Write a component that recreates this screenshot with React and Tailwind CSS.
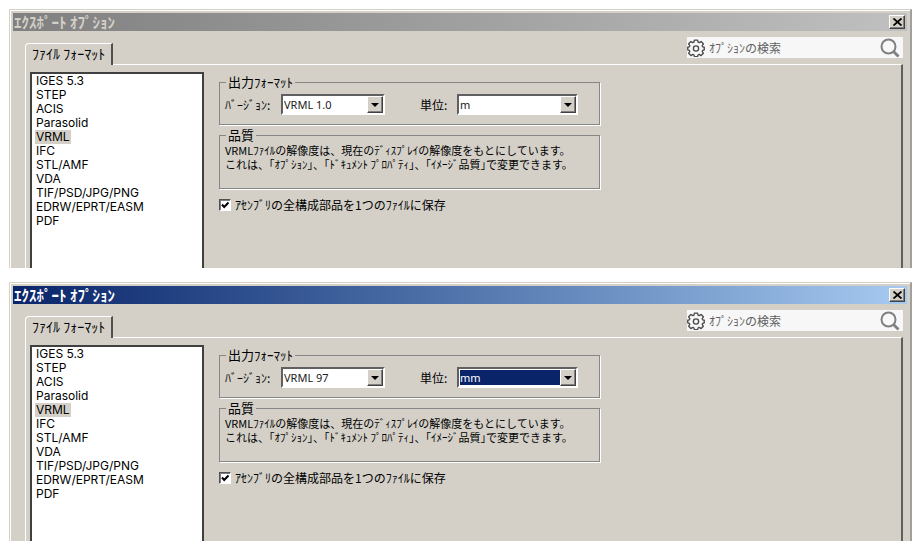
import { useId, useState } from 'react';

const FORMATS = [
    'IGES 5.3',
    'STEP',
    'ACIS',
    'Parasolid',
    'VRML',
    'IFC',
    'STL/AMF',
    'VDA',
    'TIF/PSD/JPG/PNG',
    'EDRW/EPRT/EASM',
    'PDF',
];

const VERSIONS = ['VRML 1.0', 'VRML 97'];
const UNITS = ['mm', 'cm', 'm', 'in', 'ft'];

function GearIcon() {
    return (
        <svg viewBox="0 0 24 24" className="h-[18px] w-[18px] shrink-0" fill="none" stroke="#4a4a4a" strokeWidth="1.8" strokeLinejoin="round" aria-hidden="true">
            <path d="M9.9 1.500h4.200l.7 2.800 1.500.6 2.500-1.500 3 3-1.500 2.500.6 1.500 2.100.6v3.400l-2.100.7-.6 1.500 1.500 2.500-3 3-2.500-1.500-1.500.6-.7 2.300H9.900l-.7-2.300-1.500-.6-2.500 1.500-3-3 1.500-2.500-.6-1.500-2.100-.7V11l2.100-.6.6-1.500-1.500-2.500 3-3 2.500 1.500 1.500-.6z" />
            <circle cx="12" cy="12.700" r="3.500" />
        </svg>
    );
}

function SearchIcon() {
    return (
        <svg viewBox="0 0 20 20" className="h-5 w-5" fill="none" stroke="#808080" aria-hidden="true">
            <circle cx="8.500" cy="8.500" r="7" strokeWidth="2" />
            <path d="M13.500 13.500l5 5" strokeWidth="2.800" />
        </svg>
    );
}

// Sunken combo box with a raised arrow button at its right end
function ComboBox({ id, value, options, onChange, highlighted, className }) {
    return (
        <div className={`relative h-[21px] border-2 border-t-[#606060] border-l-[#606060] border-r-white border-b-white bg-white ${className}`}>
            <select
                id={id}
                value={value}
                onChange={(e) => onChange(e.target.value)}
                className={`block h-full w-full appearance-none border border-white pr-4 font-['Noto_Sans'] text-[11px] leading-[15px] outline-none ${
                    highlighted ? 'bg-[#0a246a] text-white' : 'bg-white text-[#202020]'
                }`}
            >
                {options.map((option) => (
                    <option key={option}>{option}</option>
                ))}
            </select>
            <span className="pointer-events-none absolute inset-y-0 right-0 flex w-4 items-center justify-center border border-t-white border-l-white border-r-[#404040] border-b-[#404040] bg-[#d4d0c8] shadow-[inset_-1px_-1px_0_#808080]">
                <svg viewBox="0 0 8 4" className="h-1 w-2" aria-hidden="true">
                    <path d="M0 0h8L4 4z" fill="#000" />
                </svg>
            </span>
        </div>
    );
}

function Group({ title, children, className }) {
    return (
        <fieldset className={`min-w-0 border border-[#868686] px-[5px] shadow-[1px_1px_0_#fff] ${className}`}>
            <legend className="ml-px bg-[#d4d0c8] px-0.5 text-[13px] leading-[14px]">{title}</legend>
            {children}
        </fieldset>
    );
}

function ExportDialog({ active, initialVersion, initialUnit }) {
    const id = useId();
    const [format, setFormat] = useState('VRML');
    const [version, setVersion] = useState(initialVersion);
    const [unit, setUnit] = useState(initialUnit);
    const [single, setSingle] = useState(true);
    const [query, setQuery] = useState('');

    return (
        <section className="border-t border-l border-r-2 border-t-[#d4d0c8] border-l-[#d4d0c8] border-r-[#a0a09c] bg-[#d4d0c8] shadow-[inset_1px_1px_0_#fff]">
            <header
                className={`mx-[3px] mt-[3px] flex h-[18px] items-center justify-between bg-linear-to-r pr-0.5 pl-px ${
                    active ? 'from-[#0a246a] to-[#a6caf0] text-white' : 'from-[#808080] to-[#c0c0c0] text-[#d4d0c8]'
                }`}
            >
                <h1 className="text-[15px] leading-4 font-bold">ｴｸｽﾎﾟｰﾄ ｵﾌﾟｼｮﾝ</h1>
                <button
                    type="button"
                    aria-label="閉じる"
                    className="flex h-[14px] w-4 items-center justify-center border border-t-white border-l-white border-r-[#404040] border-b-[#404040] bg-[#d4d0c8] shadow-[inset_-1px_-1px_0_#808080]"
                >
                    <svg viewBox="0 0 9 8" className="h-2 w-[9px]" stroke="#000" strokeWidth="1.8" aria-hidden="true">
                        <path d="M.5 .5l8 7M8.500 .5l-8 7" />
                    </svg>
                </button>
            </header>

            <div className="pr-[7px] pl-[15px]">
                <div className="flex h-[33px] items-end justify-between">
                    <div role="tablist" className="-mb-px flex">
                        <button
                            type="button"
                            role="tab"
                            aria-selected="true"
                            className="h-[22px] rounded-tl-sm border-t border-r-2 border-l border-t-white border-r-[#505050] border-l-white bg-[#d4d0c8] px-1.5 pb-1 text-[14px] leading-4"
                        >
                            ﾌｧｲﾙ ﾌｫｰﾏｯﾄ
                        </button>
                    </div>
                    <label className="mb-1.5 flex h-[21px] w-[216px] items-center gap-1 bg-[#f7f7f7] pr-[3px]">
                        <GearIcon />
                        <input
                            type="text"
                            value={query}
                            onChange={(e) => setQuery(e.target.value)}
                            placeholder="ｵﾌﾟｼｮﾝの検索"
                            aria-label="ｵﾌﾟｼｮﾝの検索"
                            className="min-w-0 flex-1 bg-transparent text-[12px] outline-none placeholder:text-[#606060]"
                        />
                        <SearchIcon />
                    </label>
                </div>

                <div className="flex items-start gap-[15px] border-t border-r-2 border-l border-t-white border-r-[#606060] border-l-white pl-1">
                    <ul role="listbox" aria-label="ﾌｧｲﾙ ﾌｫｰﾏｯﾄ" className="mt-[7px] h-[196px] w-[174px] shrink-0 border-x-2 border-t-2 border-[#404040] bg-white pl-[3px] font-['Inter']">
                        {FORMATS.map((name) => (
                            <li key={name} role="option" aria-selected={name === format} className="flex h-[14px]">
                                <button
                                    type="button"
                                    onClick={() => setFormat(name)}
                                    className={`px-px text-[12px] leading-[14px] ${name === format ? 'bg-[#d4d0c8]' : ''}`}
                                >
                                    {name}
                                </button>
                            </li>
                        ))}
                    </ul>

                    <div className="mt-[10px] w-[381px]">
                        <Group title="出力ﾌｫｰﾏｯﾄ" className="pt-[5px] pb-[9px]">
                            <div className="flex items-center text-[12px]">
                                <label htmlFor={`${id}-version`} className="w-14 shrink-0">ﾊﾞｰｼﾞｮﾝ:</label>
                                <ComboBox id={`${id}-version`} value={version} options={VERSIONS} onChange={setVersion} className="w-[104px]" />
                                <label htmlFor={`${id}-unit`} className="ml-[35px] w-[37px] shrink-0">単位:</label>
                                <ComboBox id={`${id}-unit`} value={unit} options={UNITS} onChange={setUnit} highlighted={active} className="w-[121px]" />
                            </div>
                        </Group>

                        <Group title="品質" className="mt-[3px] pt-px pb-[17px]">
                            <p className="text-[11px] leading-[14px] whitespace-nowrap">
                                VRMLﾌｧｲﾙの解像度は、現在のﾃﾞｨｽﾌﾟﾚｲの解像度をもとにしています。
                                <br />
                                これは、｢ｵﾌﾟｼｮﾝ｣、｢ﾄﾞｷｭﾒﾝﾄ ﾌﾟﾛﾊﾟﾃｨ｣、｢ｲﾒｰｼﾞ品質｣で変更できます。
                            </p>
                        </Group>

                        <label className="mt-[9px] flex items-center gap-1 text-[12px] leading-[14px]">
                            <span className="relative flex">
                                <input
                                    type="checkbox"
                                    checked={single}
                                    onChange={(e) => setSingle(e.target.checked)}
                                    className="h-3 w-3 appearance-none border border-t-[#505050] border-l-[#505050] border-r-white border-b-white bg-white shadow-[inset_1px_1px_0_#808080]"
                                />
                                {single && (
                                    <svg viewBox="0 0 12 12" className="pointer-events-none absolute inset-0 h-3 w-3" fill="none" stroke="#000" strokeWidth="2" aria-hidden="true">
                                        <path d="M3 5.500l2.200 2.500L9.500 3.500" />
                                    </svg>
                                )}
                            </span>
                            ｱｾﾝﾌﾞﾘの全構成部品を1つのﾌｧｲﾙに保存
                        </label>
                    </div>
                </div>
            </div>
        </section>
    );
}

export default function App() {
    return (
        <main className="flex min-h-screen flex-col gap-[14px] bg-white pt-[9px] pr-[10px] pl-[9px] font-['Noto_Sans_CJK_JP',sans-serif] text-black">
            <ExportDialog active={false} initialVersion="VRML 1.0" initialUnit="m" />
            <ExportDialog active initialVersion="VRML 97" initialUnit="mm" />
        </main>
    );
}
